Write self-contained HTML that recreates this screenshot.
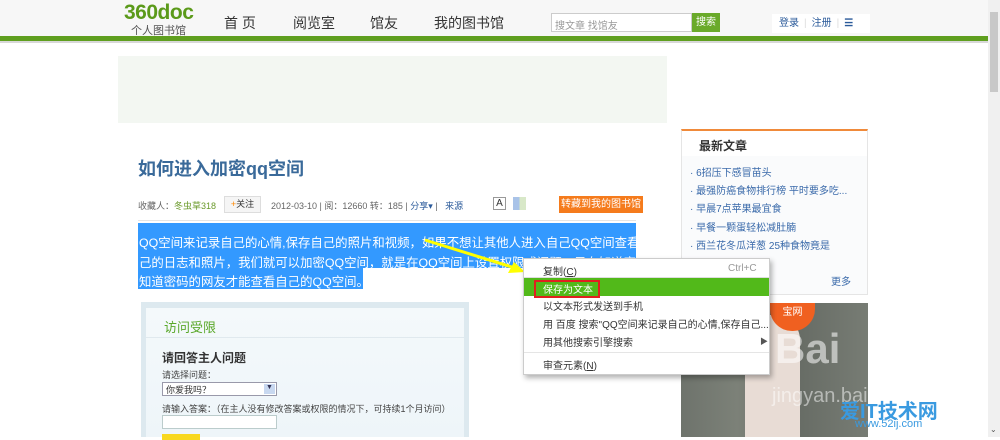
<!DOCTYPE html>
<html><head><meta charset="utf-8"><style>
*{margin:0;padding:0;box-sizing:border-box}
body{width:1000px;height:437px;overflow:hidden;background:#fff;font-family:"Liberation Sans","Noto Sans CJK SC",sans-serif;position:relative;font-size:12px;color:#333}
.a{position:absolute;white-space:nowrap}
</style></head><body>
<div class="a" style="left:0;top:0;width:988px;height:36px;background:#f7f7f7"></div>
<div class="a" style="left:0;top:36px;width:988px;height:5px;background:#5f9f1f"></div>
<div class="a" style="left:0;top:41px;width:988px;height:2px;background:#d8d8d8"></div>
<div class="a" style="left:124px;top:1px;font-size:21px;font-weight:bold;color:#5b9a1a;letter-spacing:-0.5px">360doc</div>
<div class="a" style="left:131px;top:22px;font-size:11px;color:#555">个人图书馆</div>
<div class="a" style="left:224px;top:13px;font-size:14px;color:#333">首 页</div>
<div class="a" style="left:293px;top:13px;font-size:14px;color:#333">阅览室</div>
<div class="a" style="left:370px;top:13px;font-size:14px;color:#333">馆友</div>
<div class="a" style="left:434px;top:13px;font-size:14px;color:#333">我的图书馆</div>
<div class="a" style="left:551px;top:13px;width:141px;height:19px;background:#fff;border:1px solid #ccc;font-size:10px;color:#999;padding:3px 3px">搜文章 找馆友</div>
<div class="a" style="left:692px;top:13px;width:28px;height:19px;background:#6aaa2a;color:#fff;font-size:10px;text-align:center;line-height:19px">搜索</div>
<div class="a" style="left:772px;top:14px;width:98px;height:19px;background:#fff;font-size:10px;color:#2a5a9a;line-height:19px"><span style="margin-left:7px">登录</span><span style="color:#ddd;margin:0 5px">|</span>注册<span style="color:#ddd;margin:0 5px">|</span><b>☰</b></div>
<div class="a" style="left:118px;top:56px;width:549px;height:67px;background:#f3f7f2"></div>
<div class="a" style="left:138px;top:155px;font-size:18px;color:#3a6a9a;font-weight:bold">如何进入加密qq空间</div>
<div class="a" style="left:138px;top:199px;font-size:9px;color:#666">收藏人：<span style="color:#6a9a2a">冬虫草318</span></div>
<div class="a" style="left:224px;top:196px;width:37px;height:17px;border:1px solid #ddd;background:#f5f5f5;font-size:9px;line-height:15px;text-align:center"><span style="color:#f80">+</span>关注</div>
<div class="a" style="left:271px;top:199px;font-size:9px;color:#666">2012-03-10 | 阅：12660 转：185 | <span style="color:#2a5a9a">分享▾</span> | &nbsp;&nbsp;<span style="color:#2a5a9a">来源</span></div>
<div class="a" style="left:493px;top:197px;width:13px;height:13px;border:1px solid #999;font-size:10px;text-align:center;line-height:11px">A</div>
<div class="a" style="left:513px;top:197px;width:13px;height:13px;background:linear-gradient(90deg,#a9c3e8 50%,#d8e8c8 50%)"></div>
<div class="a" style="left:559px;top:196px;width:84px;height:17px;background:#f57b1c;color:#fff;font-size:10px;text-align:center;line-height:17px">转藏到我的图书馆</div>
<div class="a" style="left:138px;top:220px;width:498px;height:1px;background:#e5e5e5"></div>
<div class="a" style="left:138px;top:223px;width:498px;height:45px;background:#3399ff"></div>
<div class="a" style="left:138px;top:268px;width:225px;height:21px;background:#3399ff"></div>
<div class="a" style="left:139px;top:234px;font-size:12.4px;color:#fff;line-height:19.7px">QQ空间来记录自己的心情,保存自己的照片和视频，如果不想让其他人进入自己QQ空间查看自<br>己的日志和照片，我们就可以加密QQ空间，就是在QQ空间上设置权限或问题，只有知道密码<br>知道密码的网友才能查看自己的QQ空间。</div>
<div class="a" style="left:141px;top:302px;width:328px;height:135px;background:#dde9ef"></div>
<div class="a" style="left:146px;top:308px;width:318px;height:129px;background:linear-gradient(180deg,#f4f9fb,#eef5f9)"></div>
<div class="a" style="left:146px;top:337px;width:318px;height:1px;background:#e0e9ee"></div>
<div class="a" style="left:164px;top:317px;font-size:13px;color:#5aa82a">访问受限</div>
<div class="a" style="left:162px;top:349px;font-size:12px;font-weight:bold;color:#333">请回答主人问题</div>
<div class="a" style="left:162px;top:368px;font-size:9px;color:#444">请选择问题：</div>
<div class="a" style="left:162px;top:382px;width:115px;height:14px;background:#fff;border:1px solid #99a;font-size:9px;color:#333;padding-left:3px">你爱我吗？<span style="position:absolute;right:1px;top:1px;width:11px;height:10px;background:#c8d8f0;font-size:7px;text-align:center;color:#335">▼</span></div>
<div class="a" style="left:162px;top:402px;font-size:9px;color:#444">请输入答案：（在主人没有修改答案或权限的情况下，可持续1个月访问）</div>
<div class="a" style="left:162px;top:415px;width:115px;height:14px;background:#fff;border:1px solid #bcc"></div>
<div class="a" style="left:162px;top:434px;width:38px;height:6px;background:#f8d820"></div>
<div class="a" style="left:681px;top:129px;width:187px;height:166px;border:1px solid #e5e5e5;border-top:2px solid #f08a3a;background:#fafbfc"></div>
<div class="a" style="left:682px;top:131px;width:185px;height:25px;background:#fff"></div>
<div class="a" style="left:699px;top:137px;font-size:12px;font-weight:bold;color:#333">最新文章</div>
<div class="a" style="left:690px;top:165px;font-size:10px;color:#3a6aaa;line-height:18.2px">· 6招压下感冒苗头<br>· 最强防癌食物排行榜 平时要多吃...<br>· 早晨7点苹果最宜食<br>· 早餐一颗蛋轻松减肚腩<br>· 西兰花冬瓜洋葱 25种食物竟是<br>· 晚餐别碰这6类...</div>
<div class="a" style="left:831px;top:273px;font-size:10px;color:#3a6aaa">更多</div>
<div class="a" style="left:681px;top:303px;width:187px;height:134px;background:linear-gradient(90deg,#6e736c,#7c8178 30%,#666b64 60%,#777c74)"></div>
<div class="a" style="left:745px;top:315px;width:55px;height:122px;background:#e8dcd5;border-radius:25px 25px 0 0"></div>
<div class="a" style="left:770px;top:303px;width:45px;height:28px;background:#f06020;border-radius:0 0 22px 22px;color:#fff;font-size:10px;text-align:center">宝网</div>
<div class="a" style="left:775px;top:325px;font-size:42px;font-weight:bold;color:rgba(255,255,255,.55)">Bai</div>
<div class="a" style="left:870px;top:330px;font-size:32px;color:rgba(255,255,255,.55)">经验</div>
<div class="a" style="left:772px;top:385px;font-size:20px;color:rgba(255,255,255,.5)">jingyan.baidu</div>
<div class="a" style="left:840px;top:395px;font-size:20px;font-weight:bold;color:#3a9ae0">爱IT技术网</div>
<div class="a" style="left:855px;top:418px;font-size:11px;color:#3a9ae0">www.52ij.com</div>
<svg class="a" style="left:420px;top:235px" width="110" height="45"><line x1="5" y1="5" x2="95" y2="33" stroke="#ff0" stroke-width="3"/><polygon points="105,37 88,38 94,27" fill="#ff0"/></svg>
<div class="a" style="left:523px;top:258px;width:247px;height:117px;background:#fff;border:1px solid #ccc;box-shadow:2px 3px 5px rgba(0,0,0,.3)"></div>
<div class="a" style="left:543px;top:263px;font-size:10px;color:#333">复制(<u>C</u>)</div>
<div class="a" style="left:728px;top:263px;font-size:10px;color:#999">Ctrl+C</div>
<div class="a" style="left:524px;top:277px;width:245px;height:1px;background:#ddd"></div>
<div class="a" style="left:524px;top:278px;width:245px;height:18px;background:#52b91a"></div>
<div class="a" style="left:534px;top:280px;width:66px;height:18px;border:2px solid #e02020"></div>
<div class="a" style="left:543px;top:281px;font-size:10px;color:#fff">保存为文本</div>
<div class="a" style="left:543px;top:299px;font-size:10px;color:#333;line-height:18px">以文本形式发送到手机<br>用 百度 搜索"QQ空间来记录自己的心情,保存自己...<br>用其他搜索引擎搜索</div>
<div class="a" style="left:760px;top:336px;font-size:8px;color:#555">▶</div>
<div class="a" style="left:524px;top:352px;width:245px;height:1px;background:#e5e5e5"></div>
<div class="a" style="left:543px;top:357px;font-size:10px;color:#333">审查元素(<u>N</u>)</div>
<div class="a" style="left:988px;top:0;width:12px;height:437px;background:#f0f0f0"></div>
<div class="a" style="left:990px;top:12px;width:8px;height:80px;background:#c8c8c8"></div>
<div class="a" style="left:990px;top:425px;font-size:8px;color:#555">⌄</div>
</body></html>
